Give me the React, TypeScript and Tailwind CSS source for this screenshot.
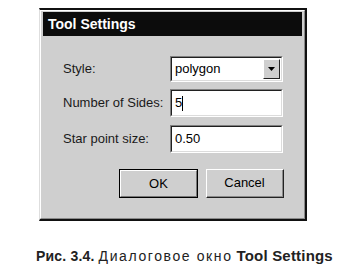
import React from 'react';

const sunken =
  'border-t border-l border-t-[#808080] border-l-[#808080] border-b border-r border-b-white border-r-white';

const Field = ({ value, caret }: { value: string; caret?: boolean }) => (
  <div className={`${sunken} w-[113px] h-[28px] bg-[#cfcfcf]`}>
    <div className="h-full border-t border-l border-t-[#202020] border-l-[#202020] border-b border-r border-b-[#dcdcdc] border-r-[#dcdcdc] bg-white flex items-center pl-[3px] text-[13px] text-black">
      <span>{value}</span>
      {caret && <span className="w-px h-[15px] bg-black" />}
    </div>
  </div>
);

const App = () => {
  return (
    <div className="w-[345px] h-[268px] bg-white overflow-hidden" style={{ fontFamily: '"Liberation Sans", Arial, sans-serif' }}>
      {/* Dialog window */}
      <div className="ml-[39px] mt-[8px] w-[268px] h-[213px] border-t-2 border-t-[#111] border-l border-l-[#dedede] border-r-2 border-r-[#111] border-b-2 border-b-[#111] bg-[#cfcfcf]">
        <div className="h-full border-t border-l border-t-white border-l-white border-r border-b border-r-[#8a8a8a] border-b-[#8a8a8a] px-[2px] pt-[1px]">
          <div className="h-[24px] bg-[#0c0c0c] flex items-center pl-[5px] text-white text-[14px] font-bold">
            Tool Settings
          </div>

          <div className="pl-[20px] pt-[20px]">
            <div className="flex items-center h-[26px]">
              <span className="w-[107px] text-[13px] text-[#1a1a1a]">Style:</span>
              <div className={`${sunken} w-[113px] h-[26px]`}>
                <div className="h-full border-t border-l border-t-[#202020] border-l-[#202020] border-b border-r border-b-[#dcdcdc] border-r-[#dcdcdc] bg-white flex items-center">
                  <span className="flex-1 pl-[3px] text-[13px] text-black">polygon</span>
                  <div className="w-[17px] h-[20px] mr-[1px] bg-[#cfcfcf] border-t border-l border-t-white border-l-white border-b border-r border-b-[#222] border-r-[#222] flex items-center justify-center">
                    <svg width="7" height="4" viewBox="0 0 7 4">
                      <path d="M0 0h7L3.5 4z" fill="#000" />
                    </svg>
                  </div>
                </div>
              </div>
            </div>

            <div className="flex items-center h-[28px] mt-[7px]">
              <span className="w-[107px] text-[13px] text-[#1a1a1a]">Number of Sides:</span>
              <Field value="5" caret />
            </div>

            <div className="flex items-center h-[28px] mt-[8px]">
              <span className="w-[107px] text-[13px] text-[#1a1a1a]">Star point size:</span>
              <Field value="0.50" />
            </div>

            <div className="flex gap-[8px] mt-[16px] pl-[56px]">
              <button className="w-[79px] h-[29px] border border-black bg-[#cfcfcf]">
                <div className="h-full border-t border-l border-t-white border-l-white border-b border-r border-b-[#777] border-r-[#777] flex items-center justify-center text-[13px] text-black">
                  OK
                </div>
              </button>
              <button className="w-[78px] h-[29px] border-t border-l border-t-white border-l-white border-b border-r border-b-[#222] border-r-[#222] bg-[#cfcfcf]">
                <div className="h-full border-b border-r border-b-[#8a8a8a] border-r-[#8a8a8a] flex items-center justify-center text-[13px] text-black">
                  Cancel
                </div>
              </button>
            </div>
          </div>
        </div>
      </div>

      {/* Caption */}
      <div className="mt-[26px] pl-[36px] text-[14px] leading-[17px] text-[#222] whitespace-nowrap">
        <span className="font-bold tracking-[0.2px]">Рис. 3.4.</span>{' '}
        <span className="tracking-[1.6px]">Диалоговое окно</span>{' '}
        <span className="font-bold text-[15px] tracking-[0.2px]">Tool Settings</span>
      </div>
    </div>
  );
};

export default App;
